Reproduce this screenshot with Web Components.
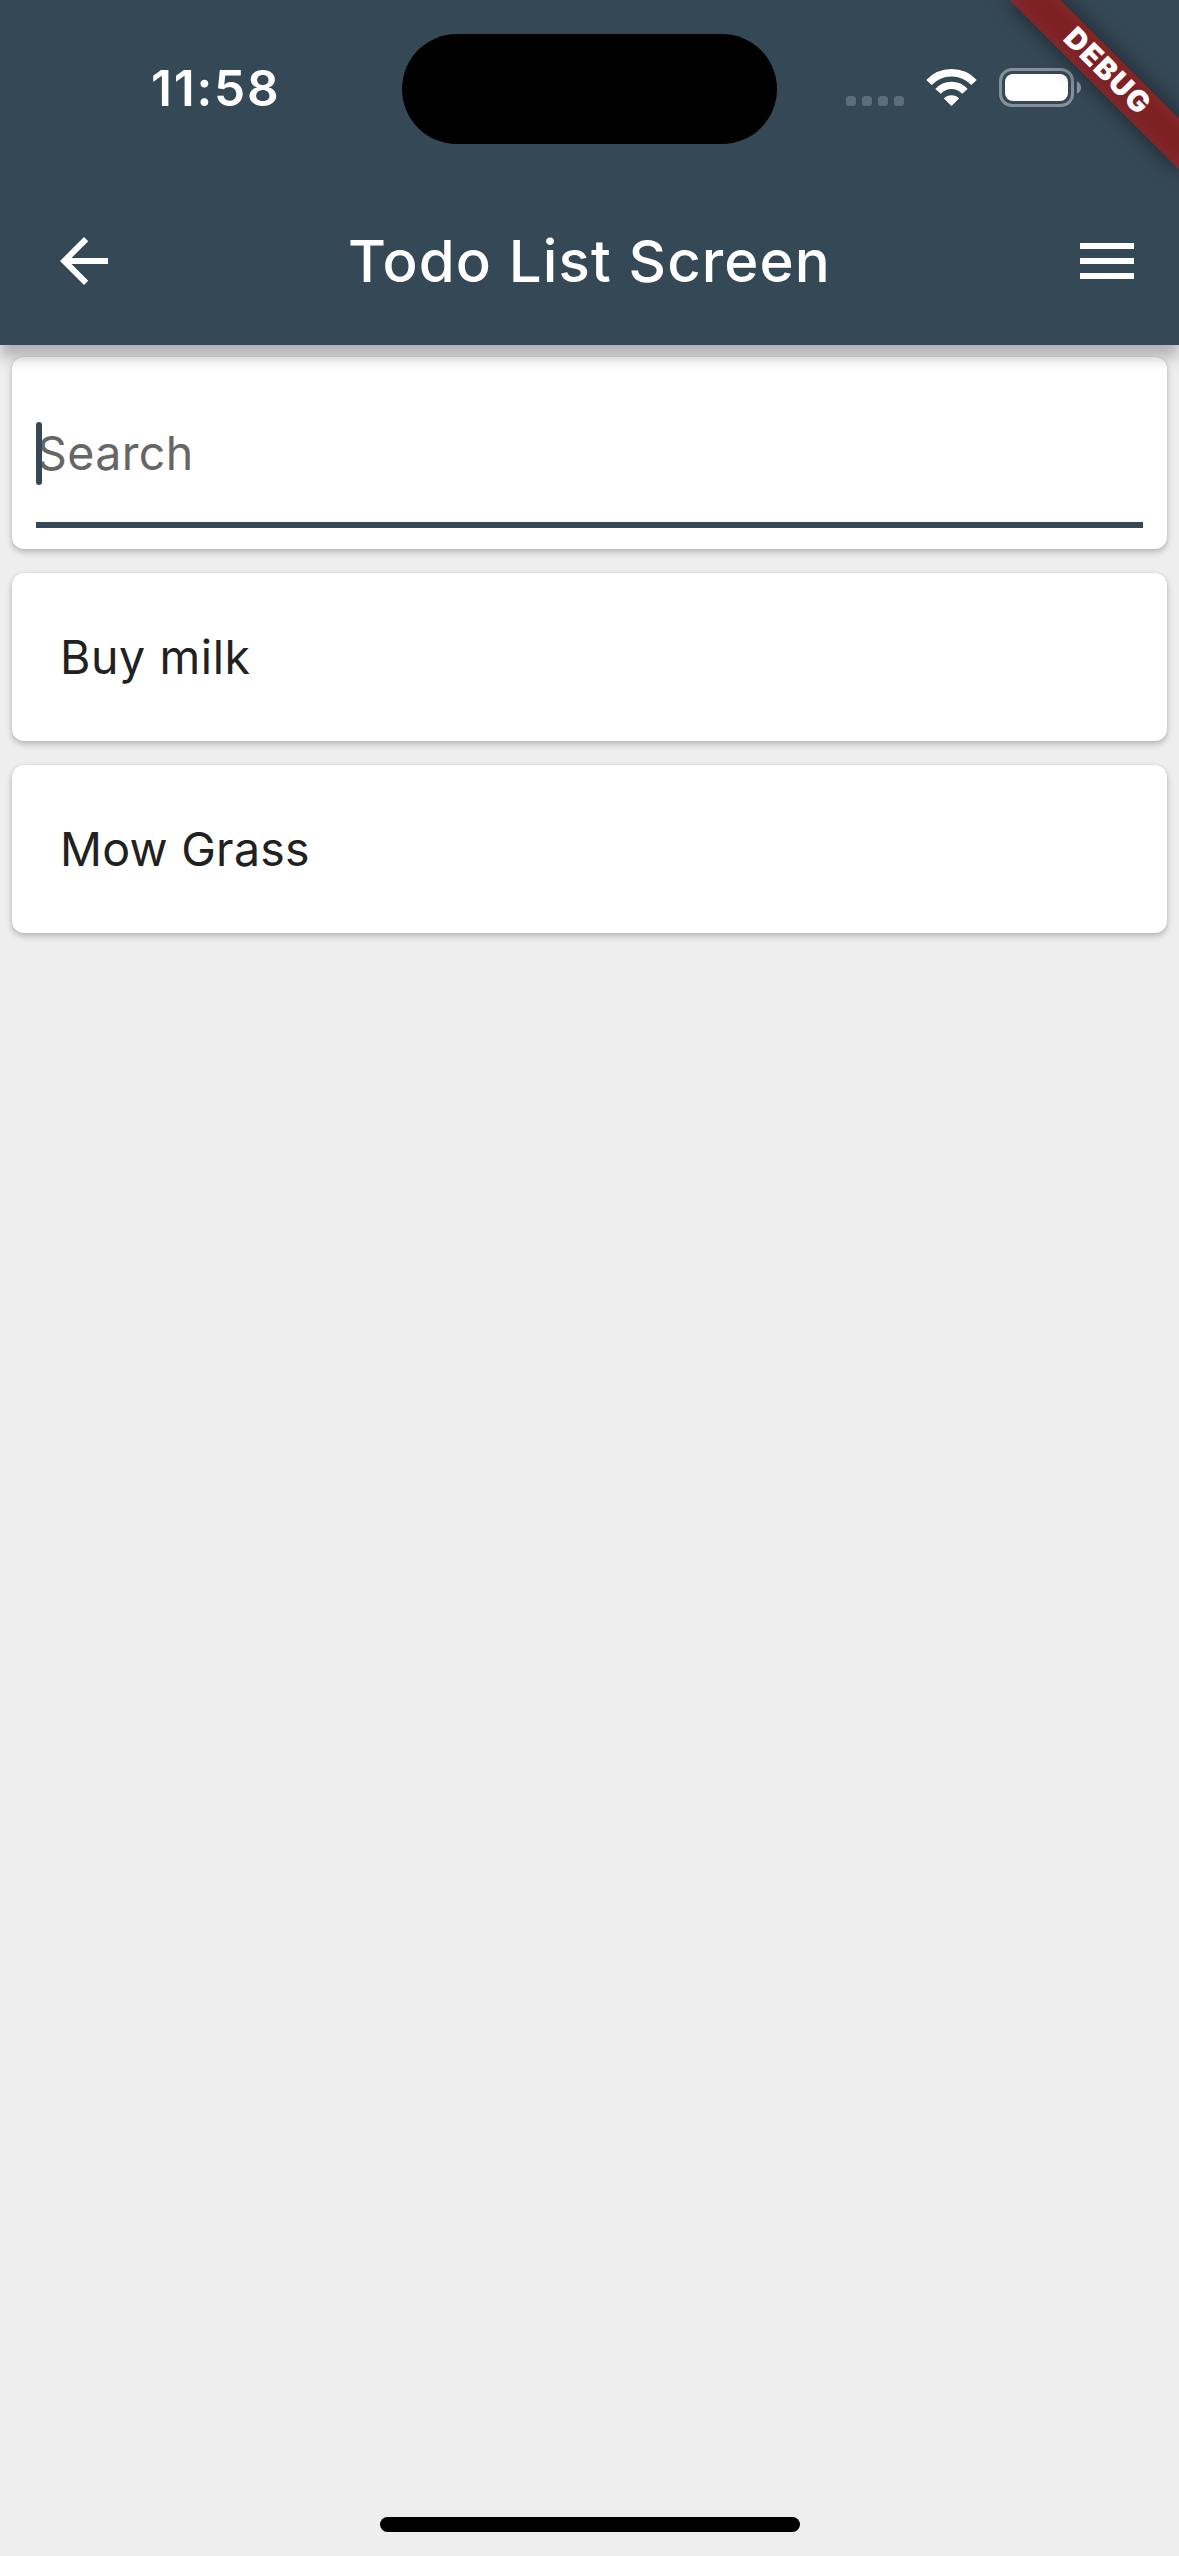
<!DOCTYPE html>
<html lang="en">
<head>
<meta charset="utf-8">
<title>Todo List Screen</title>
<style>
html,body{margin:0;padding:0}
body{font-family:Inter,"Liberation Sans",sans-serif;--primary:#354856;--surface:#fff;--page:#eee}
</style>
</head>
<body>
<phone-screen>
  <status-bar slot="header" time="11:58"></status-bar>
  <app-bar slot="header">Todo List Screen</app-bar>
  <search-card>Search</search-card>
  <todo-card style="--track:.6px">Buy milk</todo-card>
  <todo-card style="--track:.25px">Mow Grass</todo-card>
  <debug-banner slot="overlay">DEBUG</debug-banner>
</phone-screen>
<script>
const define = (name, markup) => {
  const template = document.createElement('template');
  template.innerHTML = markup;
  customElements.define(name, class extends HTMLElement {
    constructor() {
      super();
      this.attachShadow({ mode: 'open' }).append(template.content.cloneNode(true));
    }
    connectedCallback() {
      const time = this.shadowRoot.querySelector('.time');
      if (time) time.textContent = this.getAttribute('time');
    }
  });
};

define('phone-screen', `
<style>
:host{display:flex;flex-direction:column;position:relative;box-sizing:border-box;width:1179px;height:2556px;background:var(--page);overflow:hidden}
header{position:relative;z-index:1;background:var(--primary);box-shadow:0 12px 14px rgba(0,0,0,.26)}
main{flex:1;display:flex;flex-direction:column;gap:24px;padding:12px}
footer{display:flex;justify-content:center;padding-bottom:24px}
.home{width:420px;height:15px;border-radius:8px;background:#000}
</style>
<header><slot name="header"></slot></header>
<main><slot></slot></main>
<footer><div class="home"></div></footer>
<slot name="overlay"></slot>`);

define('status-bar', `
<style>
:host{display:grid;grid-template-columns:402px 375px 402px;height:177px;color:#fff}
.time{padding-left:151px;font-size:49.5px;font-weight:600;letter-spacing:1.8px;line-height:60px;margin-top:58px}
.island{height:110.4px;margin-top:33.7px;border-radius:56px;background:#000}
.icons{display:flex;gap:22px;padding-left:69px;margin-top:68px;height:40px}
svg{display:block;flex:none}
</style>
<div class="time"></div>
<div class="island"></div>
<div class="icons">
  <svg width="58" height="40" fill="#fff" fill-opacity=".2"><rect y="28" width="10" height="10" rx="3"/><rect x="16" y="28" width="10" height="10" rx="3"/><rect x="32" y="28" width="10" height="10" rx="3"/><rect x="48" y="28" width="10" height="10" rx="3"/></svg>
  <svg width="51" height="40" fill="none" stroke="#fff" stroke-width="7.4"><path d="M3 14.5A30.7 30.7 0 0 1 48 14.5"/><path d="M12.1 23.4A18 18 0 0 1 38.9 23.4"/><path d="M25.5 38 17.9 30.4A10.5 10.5 0 0 1 33.1 30.4Z" fill="#fff" stroke="none"/></svg>
  <svg width="84" height="40"><rect x="1.5" y="1.5" width="72" height="36" rx="11.5" fill="none" stroke="#fff" stroke-opacity=".4" stroke-width="3"/><rect x="6" y="6" width="63" height="27" rx="8" fill="#fff"/><path d="M78 13.3Q82 15.5 82 19.5T78 25.7Z" fill="#fff" fill-opacity=".45"/></svg>
</div>`);

define('app-bar', `
<style>
:host{display:grid;grid-template-columns:168px 1fr 168px;align-items:center;height:168px;color:#fff}
h1{margin:0;text-align:center;font-size:58.2px;line-height:72px;font-weight:500;letter-spacing:1.1px;white-space:nowrap}
svg{display:block;width:72px;height:72px;fill:#fff}
.back{margin-left:48px}.menu{margin-left:60px}
</style>
<svg class="back" viewBox="0 0 24 24"><path d="M20 11H7.83l5.59-5.59L12 4l-8 8 8 8 1.41-1.41L7.83 13H20v-2z"/></svg>
<h1><slot></slot></h1>
<svg class="menu" viewBox="0 0 24 24"><path d="M3 18h18v-2H3v2zm0-5h18v-2H3v2zm0-7v2h18V6H3z"/></svg>`);

const card = 'border-radius:12px;background:var(--surface);box-shadow:0 3px 6px rgba(0,0,0,.24),0 0 3px rgba(0,0,0,.07)';

define('search-card', `
<style>
:host{display:block;box-sizing:border-box;height:192px;padding:0 24px;${card}}
.field{position:relative;display:flex;align-items:center;box-sizing:border-box;height:171px;padding-top:27px;border-bottom:6px solid var(--primary);font-size:46.5px;line-height:60px;letter-spacing:.4px;color:#666}
.text{padding-left:1px}
.caret{position:absolute;left:0;top:65px;width:6px;height:63px;border-radius:3px;background:var(--primary)}
</style>
<div class="field"><span class="text"><slot></slot></span><i class="caret"></i></div>`);

define('todo-card', `
<style>
:host{display:flex;align-items:center;box-sizing:border-box;height:168px;padding:0 48px;font-size:46.5px;line-height:60px;letter-spacing:var(--track,0);color:#212121;${card}}
</style>
<span><slot></slot></span>`);

define('debug-banner', `
<style>
:host{position:absolute;z-index:2;top:0;right:0;width:300px;height:300px;overflow:hidden}
.ribbon,.shade{position:absolute;left:107.9px;top:54.1px;width:240px;height:36px;transform:rotate(45deg)}
.shade{background:rgba(0,0,0,.5);filter:blur(11.9px)}
.ribbon{background:rgba(183,28,28,.627);color:#fff;text-align:center;font-size:29.3px;font-weight:900;line-height:34px;letter-spacing:1.4px;text-indent:0}
</style>
<div class="shade"></div>
<div class="ribbon"><slot></slot></div>`);
</script>
</body>
</html>
